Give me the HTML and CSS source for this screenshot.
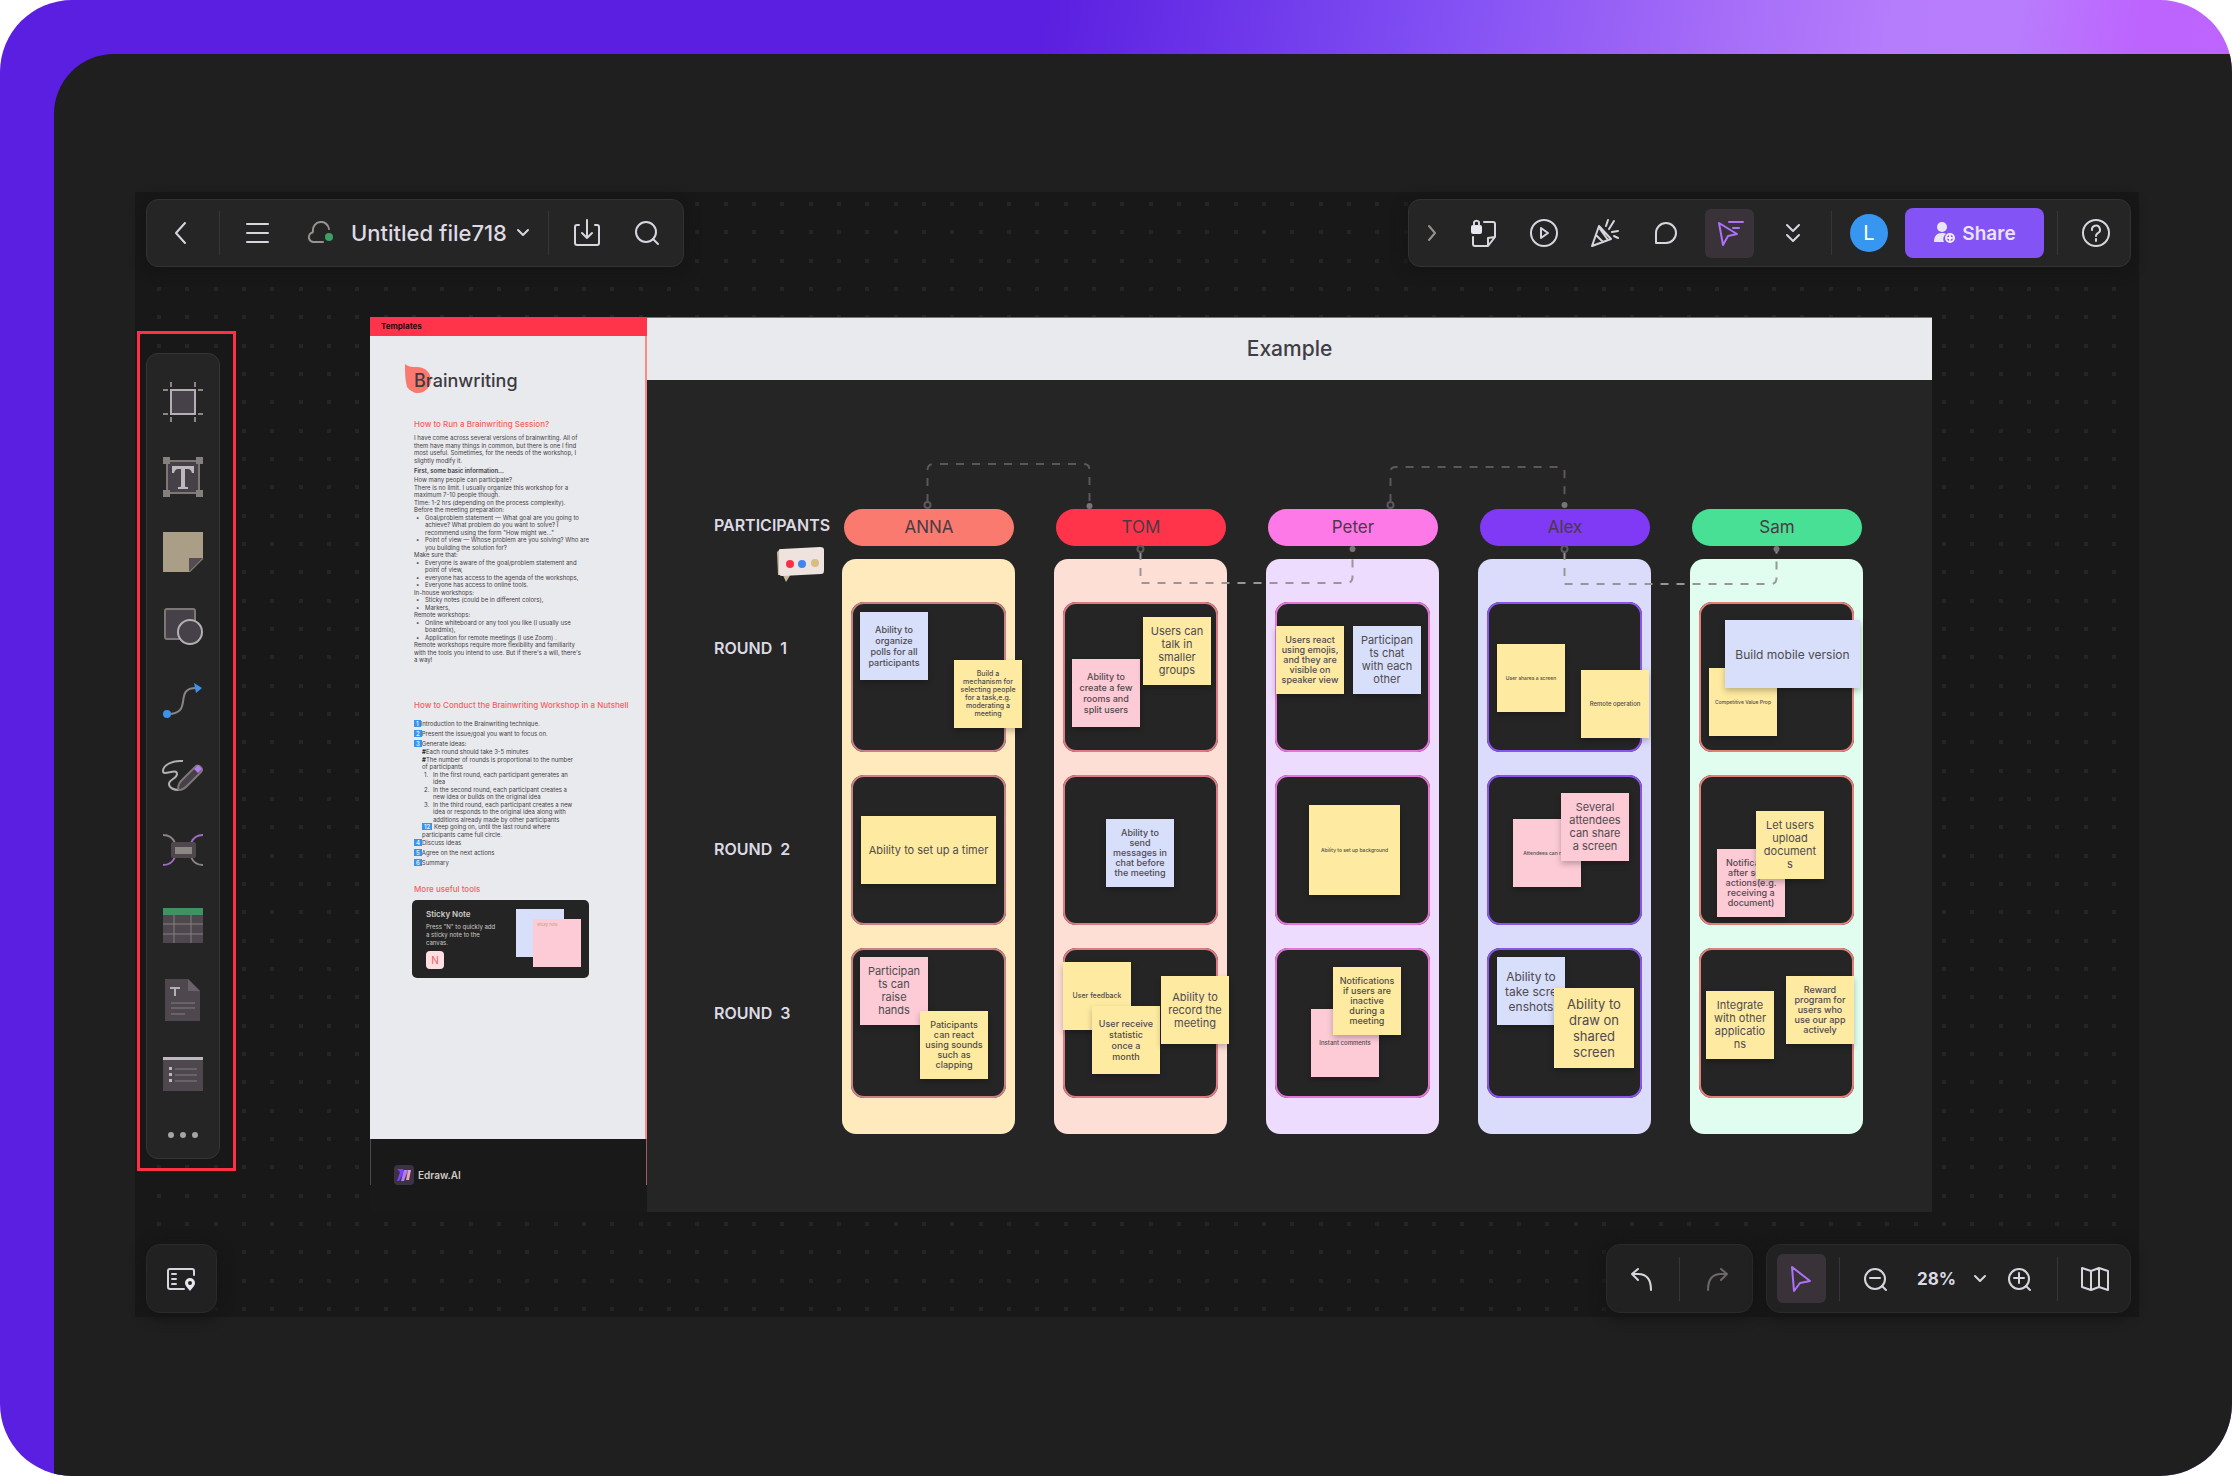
FILE: index.html
```html
<!DOCTYPE html>
<html lang="en">
<head>
<meta charset="utf-8">
<title>Untitled file718</title>
<link rel="stylesheet" href="styles.css">
</head>
<body>
<div class="frame">
<div class="backdrop">
<main class="screen">
  <svg class="dots" width="100%" height="100%" aria-hidden="true">
    <defs>
      <pattern id="dot-grid" width="85" height="85" patternUnits="userSpaceOnUse">
        <g fill="#252525">
          <rect x="22" y="10" width="4" height="4"/><rect x="50" y="10" width="4" height="4"/><rect x="79" y="10" width="4" height="4"/>
          <rect x="22" y="38" width="4" height="4"/><rect x="50" y="38" width="4" height="4"/><rect x="79" y="38" width="4" height="4"/>
          <rect x="22" y="67" width="4" height="4"/><rect x="50" y="67" width="4" height="4"/><rect x="79" y="67" width="4" height="4"/>
        </g>
      </pattern>
    </defs>
    <rect width="100%" height="100%" fill="url(#dot-grid)"/>
  </svg>

  <header class="bar-row">
    <div class="bar file-bar">
      <button class="icon-btn" aria-label="Back"><svg width="24" height="24" viewBox="0 0 24 24"><path d="M16 2 7 12l9 10"/></svg></button>
      <span class="sep"></span>
      <button class="icon-btn" aria-label="Menu"><svg width="24" height="24" viewBox="0 0 24 24"><path d="M1 3h21M1 12h21M1 21h21"/></svg></button>
      <button class="file-name">
        <svg width="28" height="24" viewBox="0 0 28 24"><path class="dim" d="M16 21H6a5 5 0 0 1-2-9c1 0 2-1 2-2a8 8 0 0 1 16-2"/><circle class="ok" cx="22" cy="16" r="4"/></svg>
        <span>Untitled file718</span>
        <svg class="chev" width="18" height="18" viewBox="0 0 18 18"><path d="m4 6 5 5 5-5"/></svg>
      </button>
      <span class="sep"></span>
      <button class="icon-btn" aria-label="Export"><svg width="28" height="28" viewBox="0 0 28 28"><path d="M6 6H4a2 2 0 0 0-2 2v16a2 2 0 0 0 2 2h20a2 2 0 0 0 2-2V8a2 2 0 0 0-2-2h-2M14 1v18m-5-5 5 5 5-5"/></svg></button>
      <button class="icon-btn" aria-label="Search"><svg width="26" height="26" viewBox="0 0 26 26"><circle cx="12" cy="12" r="10"/><path d="m19 19 5 5"/></svg></button>
    </div>
    <div class="bar action-bar">
      <button class="icon-btn slim" aria-label="Collapse"><svg width="18" height="18" viewBox="0 0 18 18"><path class="dim" d="m6 2 6 7-6 7"/></svg></button>
      <button class="icon-btn" aria-label="Lock"><svg width="30" height="30" viewBox="0 0 30 30"><path d="M16 4h9a2 2 0 0 1 2 2v13l-7 1v8H7a2 2 0 0 1-2-2v-7M27 19l-7 9"/><rect class="solid" x="3" y="7" width="11" height="9" rx="2"/><path d="M6 7V4a3 3 0 0 1 5 0v3"/></svg></button>
      <button class="icon-btn" aria-label="Present"><svg width="30" height="30" viewBox="0 0 30 30"><circle cx="15" cy="15" r="13"/><path d="m12 10 7 5-7 5z"/></svg></button>
      <button class="icon-btn" aria-label="Celebrate"><svg width="30" height="30" viewBox="0 0 30 30"><path d="M9 8 2 28l19-7zM6 17l7 7M10 11l8 11M16 8l2-6M19 11l5-8M22 14l6-1M24 18l4 2"/></svg></button>
      <button class="icon-btn" aria-label="Comment"><svg width="26" height="26" viewBox="0 0 26 26"><path d="M3 23V13a10 10 0 1 1 10 10z"/></svg></button>
      <button class="icon-btn active" aria-label="Follow cursor"><svg width="28" height="28" viewBox="0 0 28 28"><path d="m3 4 4 22 5-9 9-2zM13 3h14M17 9h6"/></svg></button>
      <button class="icon-btn" aria-label="More"><svg width="20" height="24" viewBox="0 0 20 24"><path d="m4 4 6 6 6-6M4 14l6 6 6-6"/></svg></button>
      <span class="sep"></span>
      <button class="avatar">L</button>
      <button class="share"><svg width="22" height="22" viewBox="0 0 22 22"><circle class="fill" cx="9" cy="5" r="5"/><path class="fill" d="M1 20c0-6 3-9 8-9 2 0 3 0 4 1a6 6 0 0 0-2 8z"/><circle class="ring" cx="17" cy="16" r="4"/><path class="ring" d="M17 14v4M15 16h4"/></svg>Share</button>
      <span class="sep"></span>
      <button class="icon-btn" aria-label="Help"><svg width="30" height="30" viewBox="0 0 30 30"><circle cx="15" cy="15" r="13"/><path d="M11 12a4 4 0 1 1 6 3c-1 1-2 1-2 3M15 21v2"/></svg></button>
    </div>
  </header>

  <div class="workspace">
    <aside class="highlight">
      <nav class="tool-panel" aria-label="Tools">
        <div class="tools">
          <button aria-label="Frame"><svg width="40" height="40" viewBox="0 0 40 40"><path class="g2" d="M8 0v5M32 0v5M8 35v5M32 35v5M0 8h5M0 32h5M35 8h5M35 32h5"/><rect class="g1" x="8" y="8" width="24" height="24"/></svg></button>
          <button aria-label="Text"><svg width="40" height="40" viewBox="0 0 40 40"><rect class="g3" x="4" y="4" width="32" height="32"/><path class="f2" d="M0 0h7v7H0zM33 0h7v7h-7zM0 33h7v7H0zM33 33h7v7h-7z"/><path class="f1" d="M9 9h22v7h-2c-1-3-2-4-4-4h-3v17c0 1 1 1 3 1v2H15v-2c2 0 3 0 3-1V12h-3c-2 0-3 1-4 4H9z"/></svg></button>
          <button aria-label="Sticky note"><svg width="40" height="40" viewBox="0 0 40 40"><path fill="#aa9f86" d="M0 0h40v27L27 40H0z"/><path fill="#544c55" d="M26 26h14L26 40z"/></svg></button>
          <button aria-label="Shapes"><svg width="40" height="40" viewBox="0 0 40 40"><rect class="g3" x="2" y="3" width="30" height="30" rx="2"/><circle class="g1" cx="27" cy="26" r="12"/></svg></button>
          <button aria-label="Connector"><svg width="40" height="40" viewBox="0 0 40 40"><path class="g2" d="M5 33c26 0 5-26 28-26"/><circle fill="#3a94ee" cx="4" cy="33" r="4"/><path fill="#3a94ee" d="m31 2 8 5-6 5z"/></svg></button>
          <button aria-label="Pen"><svg width="42" height="40" viewBox="0 0 42 40"><path class="g1 hollow" d="M21 5C9 4 1 10 1 15c0 6 14-4 14 3 0 5-8 5-8 10 0 4 5 6 10 6"/><path class="g3" d="M17 34c-2-2 0-7 2-9L34 10c3-2 8 3 5 6L25 30c-2 2-6 4-8 4z"/><path fill="#b27cf0" d="m36 9 4 4-4 4-4-4z"/></svg></button>
          <button aria-label="Mind map"><svg width="40" height="40" viewBox="0 0 40 40"><path class="g2" d="M0 4c6 0 10 3 12 8M40 34c-6 0-10-3-12-8"/><path fill="none" stroke="#a06ac4" stroke-width="2" d="M40 4c-6 0-10 3-12 8M0 34c6 0 10-3 12-8"/><rect fill="#4f474e" x="8" y="11" width="25" height="16" rx="2"/><rect fill="#8c8685" x="12" y="16" width="17" height="7"/></svg></button>
          <button aria-label="Table"><svg width="40" height="40" viewBox="0 0 40 40"><path fill="#4f474e" d="M0 3h40v35H0z"/><path fill="#3f9361" d="M0 3h40v7H0z"/><path class="thin" d="M11 10v28M28 10v28M0 19h40M0 29h40"/></svg></button>
          <button aria-label="Document"><svg width="40" height="42" viewBox="0 0 40 42"><path fill="#4f474e" d="M2 0h23l12 12v30H2z"/><path fill="#6a626a" d="M25 0v12h12z"/><path class="g1" d="M7 9h10M12 9v8"/><path class="thin" d="M8 24h24M8 29h24M8 35h14"/></svg></button>
          <button aria-label="List"><svg width="40" height="40" viewBox="0 0 40 40"><path fill="#4f474e" d="M0 2h40v34H0z"/><path class="f1" d="M0 2h40v3H0z"/><path class="thin" d="M12 14h22M12 20h22M12 26h22"/><path class="f1" d="M6 12h3v3H6zM6 18h3v3H6zM6 24h3v3H6z"/></svg></button>
        </div>
        <button class="more" aria-label="More tools"><svg width="40" height="8" viewBox="0 0 40 8"><g fill="#a8a3a2"><circle cx="8" cy="4" r="3"/><circle cx="20" cy="4" r="3"/><circle cx="32" cy="4" r="3"/></g></svg></button>
      </nav>
    </aside>

    <section class="board">
      <article class="sheet">
        <div class="tag">Templates</div>
        <div class="sheet-body">
          <h1><svg class="blob" width="28" height="30" viewBox="0 0 28 30"><path fill="#f9796f" d="M0 0c4 3 7 3 12 3a13 13 0 1 1-10 20C0 16 0 8 0 0z"/></svg><span>Brainwriting</span></h1>
          <h2>How to Run a Brainwriting Session?</h2>
          <div class="lines intro">
            <p>I have come across several versions of brainwriting. All of</p>
            <p>them have many things in common, but there is one I find</p>
            <p>most useful. Sometimes, for the needs of the workshop, I</p>
            <p>slightly modify it.</p>
          </div>
          <h3>First, some basic information...</h3>
          <div class="lines guide">
            <p>How many people can participate?</p>
            <p>There is no limit. I usually organize this workshop for a</p>
            <p>maximum 7-10 people though.</p>
            <p>Time: 1-2 hrs (depending on the process complexity).</p>
            <p>Before the meeting preparation:</p>
            <p class="li dot">Goal/problem statement — What goal are you going to</p>
            <p class="li">achieve? What problem do you want to solve? I</p>
            <p class="li">recommend using the form "How might we..."</p>
            <p class="li dot">Point of view — Whose problem are you solving? Who are</p>
            <p class="li">you building the solution for?</p>
            <p>Make sure that:</p>
            <p class="li dot">Everyone is aware of the goal/problem statement and</p>
            <p class="li">point of view,</p>
            <p class="li dot">everyone has access to the agenda of the workshops,</p>
            <p class="li dot">Everyone has access to online tools.</p>
            <p>In-house workshops:</p>
            <p class="li dot">Sticky notes (could be in different colors),</p>
            <p class="li dot">Markers,</p>
            <p>Remote workshops:</p>
            <p class="li dot">Online whiteboard or any tool you like (I usually use</p>
            <p class="li">boardmix),</p>
            <p class="li dot">Application for remote meetings (I use Zoom) .</p>
            <p>Remote workshops require more flexibility and familiarity</p>
            <p>with the tools you intend to use. But if there's a will, there's</p>
            <p>a way!</p>
          </div>
          <h2 class="second">How to Conduct the Brainwriting Workshop in a Nutshell</h2>
          <p class="step"><b>1</b>Introduction to the Brainwriting technique.</p>
          <p class="step"><b>2</b>Present the issue/goal you want to focus on.</p>
          <p class="step"><b>3</b>Generate ideas:</p>
          <div class="lines detail">
            <p><i>#</i>Each round should take 3-5 minutes</p>
            <p><i>#</i>The number of rounds is proportional to the number</p>
            <p>of participants</p>
            <p class="num" data-n="1.">In the first round, each participant generates an</p>
            <p class="num">idea</p>
            <p class="num" data-n="2.">In the second round, each participant creates a</p>
            <p class="num">new idea or builds on the original idea</p>
            <p class="num" data-n="3.">In the third round, each participant creates a new</p>
            <p class="num">idea or responds to the original idea along with</p>
            <p class="num">additions already made by other participants</p>
            <p><b>12</b> Keep going on, until the last round where</p>
            <p>participants came full circle.</p>
          </div>
          <p class="step"><b>4</b>Discuss ideas</p>
          <p class="step"><b>5</b>Agree on the next actions</p>
          <p class="step"><b>6</b>Summary</p>
          <h2 class="third">More useful tools</h2>
          <div class="tip">
            <div class="tip-text">
              <strong>Sticky Note</strong>
              <p>Press "N" to quickly add<br>a sticky note to the<br>canvas.</p>
              <kbd>N</kbd>
            </div>
            <div class="tip-art"><span class="sq-blue"></span><span class="sq-pink">sticky note</span></div>
          </div>
        </div>
        <footer class="brand">
          <svg width="20" height="20" viewBox="0 0 20 20"><rect width="20" height="20" rx="4" fill="#3b3344"/><path fill="#7a43f5" d="M3 4h6l1 3-5 9H3l3-9z"/><path fill="#b07cf5" d="M10 5h4l-4 11H7z"/><path fill="#f0a0b8" d="M14 5h3l-2 10h-3z"/></svg>
          Edraw.AI
        </footer>
      </article>

      <div class="example">
        <h2 class="example-head">Example</h2>
        <div class="example-body">
          <div class="labels">
            <div class="label-top">PARTICIPANTS</div>
            <svg class="bubble" width="48" height="36" viewBox="0 0 48 36"><path fill="#c9b89a" d="M1 5 4 2v26H2zM6 26l4 9 5-8z"/><path fill="#eee3df" d="M3 4c0-2 1-2 3-2l38-2c3 0 4 1 4 3v20c0 3-1 4-3 4L6 29c-2 0-3-1-3-3z"/><circle cx="14" cy="17" r="4" fill="#fb3048"/><circle cx="26" cy="17" r="4" fill="#4285f0"/><circle cx="39" cy="16" r="4" fill="#d8be82"/></svg>
            <div class="round r1">ROUND &nbsp;1</div>
            <div class="round r2">ROUND &nbsp;2</div>
            <div class="round r3">ROUND &nbsp;3</div>
          </div>
          <div class="columns">
            <section class="person anna">
              <h3>ANNA</h3>
              <div class="lane">
                <div class="cell"><div class="note blue m n-polls">Ability to organize<br>polls for all participants</div><div class="note xs n-select">Build a mechanism for selecting people for a task,e.g. moderating a meeting</div></div>
                <div class="cell"><div class="note l n-timer">Ability to set up a timer</div></div>
                <div class="cell"><div class="note pink l n-hands">Participan<wbr>ts can<br>raise<br>hands</div><div class="note s n-sounds">Paticipants can react using sounds such as clapping</div></div>
              </div>
            </section>
            <section class="person tom">
              <h3>TOM</h3>
              <div class="lane">
                <div class="cell"><div class="note pink m n-rooms">Ability to create a few rooms and split users</div><div class="note l n-groups">Users can talk in smaller groups</div></div>
                <div class="cell"><div class="note blue s n-chat">Ability to<br>send<br>messages in chat before the meeting</div></div>
                <div class="cell"><div class="note xs n-feedback">User feedback</div><div class="note m n-stats">User receive statistic<br>once a<br>month</div><div class="note l n-record">Ability to record the meeting</div></div>
              </div>
            </section>
            <section class="person peter">
              <h3>Peter</h3>
              <div class="lane">
                <div class="cell"><div class="note s n-emoji">Users react using emojis, and they are visible on speaker view</div><div class="note blue l n-each">Participan<wbr>ts chat<br>with each other</div></div>
                <div class="cell"><div class="note xxs n-bg">Ability to set up background</div></div>
                <div class="cell"><div class="note pink xxs wide n-comment">Instant comments</div><div class="note s n-inactive">Notifications if users are inactive<br>during a meeting</div></div>
              </div>
            </section>
            <section class="person alex">
              <h3>Alex</h3>
              <div class="lane">
                <div class="cell"><div class="note xxs n-shares">User shares a screen</div><div class="note xxs wide n-remote">Remote operation</div></div>
                <div class="cell"><div class="note pink xxs n-vote">Attendees can raise</div><div class="note pink l n-several">Several attendees can share a screen</div></div>
                <div class="cell"><div class="note blue xl n-shots">Ability to take scre<wbr>enshots</div><div class="note xxl n-draw">Ability to draw on shared screen</div></div>
              </div>
            </section>
            <section class="person sam">
              <h3>Sam</h3>
              <div class="lane">
                <div class="cell"><div class="note xxs n-value">Competitive Value Prop</div><div class="note blue xl n-mobile">Build mobile version</div></div>
                <div class="cell"><div class="note pink s n-notify">Notification after some actions(e.g. receiving a document)</div><div class="note l n-upload">Let users upload document<br>s</div></div>
                <div class="cell"><div class="note l n-apps">Integrate with other applicatio<wbr>ns</div><div class="note s n-reward">Reward program for users who<br>use our app actively</div></div>
              </div>
            </section>
          </div>
          <svg class="links" viewBox="648 380 1284 832" aria-hidden="true">
            <g fill="none" stroke="#5d575d" stroke-width="2" stroke-dasharray="8 8">
              <path d="M928 502v-32q0-6 6-6h150q6 0 6 6v34"/>
              <path d="M1391 502v-30q0-5 5-5h164q5 0 5 5v30"/>
            </g>
            <g fill="none" stroke="#9a959c" stroke-width="2" stroke-dasharray="8 8">
              <path d="M1141 552v31h206q6 0 6-6v-26"/>
              <path d="M1565 552v32h206q6 0 6-6v-27"/>
            </g>
            <g fill="#252525" stroke="#5d575d" stroke-width="2"><circle cx="928" cy="505" r="3"/><circle cx="1391" cy="505" r="3"/><circle cx="1141" cy="549" r="3"/><circle cx="1565" cy="549" r="3"/></g>
            <g fill="#79747a"><circle cx="1090" cy="506" r="3"/><circle cx="1565" cy="505" r="3"/><circle cx="1353" cy="549" r="3"/><circle cx="1777" cy="549" r="3"/></g>
          </svg>
        </div>
      </div>
    </section>
  </div>

  <footer class="bar-row bottom-row">
    <div class="bar corner-bar">
      <button class="icon-btn" aria-label="Outline"><svg width="30" height="26" viewBox="0 0 30 26"><path d="M28 9V5a2 2 0 0 0-2-2H4a2 2 0 0 0-2 2v16a2 2 0 0 0 2 2h14M6 8h4M6 13h4M6 18h4"/><path class="solid" fill-rule="evenodd" d="M24 12a5 5 0 0 1 5 5c0 3-3 5-5 8-2-3-5-5-5-8a5 5 0 0 1 5-5zm0 3a2 2 0 1 0 0 4 2 2 0 0 0 0-4z"/></svg></button>
    </div>
    <div class="bar-group">
      <div class="bar history-bar">
        <button class="icon-btn" aria-label="Undo"><svg width="26" height="26" viewBox="0 0 26 26"><path d="M9 3 3 8l6 6M3 8h6c9 0 13 6 13 16"/></svg></button>
        <span class="sep"></span>
        <button class="icon-btn faded" aria-label="Redo"><svg width="26" height="26" viewBox="0 0 26 26"><path d="m17 3 6 5-6 6M23 8h-6C8 8 4 14 4 24"/></svg></button>
      </div>
      <div class="bar zoom-bar">
        <button class="icon-btn active" aria-label="Select"><svg width="26" height="28" viewBox="0 0 26 28"><path d="m4 2 2 24 6-8 10-2z"/></svg></button>
        <span class="sep"></span>
        <button class="icon-btn" aria-label="Zoom out"><svg width="26" height="26" viewBox="0 0 26 26"><circle cx="13" cy="13" r="10"/><path d="M8 12h10m2 8 4 4"/></svg></button>
        <button class="zoom-value">28%<svg width="18" height="18" viewBox="0 0 18 18"><path d="m4 6 5 5 5-5"/></svg></button>
        <button class="icon-btn" aria-label="Zoom in"><svg width="26" height="26" viewBox="0 0 26 26"><circle cx="13" cy="13" r="10"/><path d="M8 12h10M13 7v10m7 3 4 4"/></svg></button>
        <span class="sep"></span>
        <button class="icon-btn" aria-label="Map"><svg width="30" height="26" viewBox="0 0 30 26"><path d="m2 2 9 3 8-3 9 3v19l-9-3-8 3-9-3zM11 5v19M19 2v19"/></svg></button>
      </div>
    </div>
  </footer>
</main>
</div>
</div>
</body>
</html>
```
FILE: styles.css
```css
* { box-sizing: border-box; }

body {
  margin: 0;
  background: #fff;
  font-family: Inter, "Liberation Sans", sans-serif;
  color: #dddae4;
}

h1, h2, h3, p { margin: 0; font-weight: 400; }

button {
  border: 0;
  padding: 0;
  background: none;
  color: inherit;
  font: inherit;
  cursor: pointer;
}

/* Outer frame */
.frame {
  min-height: 100vh;
  display: flex;
  padding: 54px 0 0 54px;
  border-radius: 72px;
  overflow: hidden;
  background: linear-gradient(100deg, #5a1fe0 0%, #5a1fe0 42%, #7f4df3 57%, #a56cf8 69%, #b57cfc 76%, #b87dfc 81%, #bd64ff 86%, #bf63ff 100%);
}

.backdrop {
  flex: 1;
  min-width: 0;
  padding: 138px 93px 159px 81px;
  border-top-left-radius: 60px;
  background: #1f1f1f;
}

.screen {
  position: relative;
  isolation: isolate;
  display: flex;
  flex-direction: column;
  height: 100%;
  padding: 7px 0 4px;
  background: #181818;
}

.dots { position: absolute; inset: 0; z-index: -1; }

/* Floating bars */
.bar-row {
  display: flex;
  justify-content: space-between;
  padding: 0 8px 0 11px;
}

.bar {
  display: flex;
  align-items: center;
  height: 68px;
  padding: 0 13px;
  border: 1px solid #323133;
  border-radius: 12px;
  background: #252525;
  box-shadow: 0 2px 12px 4px #151515;
}

.bar svg {
  display: block;
  fill: none;
  stroke: #d9d5df;
  stroke-width: 2;
  stroke-linecap: round;
  stroke-linejoin: round;
}

.bar .dim { stroke: #98928f; }
.bar .ok { fill: #3f9e63; stroke: none; }
.bar .solid, .bar .fill { fill: #e8e6ee; stroke: none; }
.bar .ring { fill: #8353f5; stroke: #f1edff; }

.sep { width: 1px; height: 44px; background: #37353a; }

.icon-btn {
  display: grid;
  place-items: center;
  width: 44px;
  height: 44px;
  border-radius: 6px;
}

.icon-btn.slim { width: 24px; }
.icon-btn.active { width: 49px; height: 49px; background: #393239; }
.icon-btn.active svg { stroke: #ad72f8; }
.icon-btn.faded svg { stroke: #6d676a; }

.file-bar { gap: 16px; padding: 0 14px 0 12px; }

.file-name {
  display: flex;
  align-items: center;
  margin-left: 11px;
  font-size: 22px;
  line-height: 28px;
  font-weight: 500;
}
.file-name span { margin: 0 7px 0 16px; }

.action-bar { gap: 17px; padding: 0 12px 0 11px; }
.action-bar .sep { margin: 0 -1px; }

.avatar {
  width: 38px;
  height: 38px;
  margin-left: 2px;
  border-radius: 50%;
  background: #3797f0;
  color: #fff;
  font-size: 20px;
}

.share {
  display: flex;
  align-items: center;
  justify-content: center;
  gap: 7px;
  width: 139px;
  height: 50px;
  margin-right: -3px;
  border-radius: 8px;
  background: #8353f5;
  color: #e9e4fb;
  font-size: 19px;
  font-weight: 600;
}

/* Workspace */
.workspace {
  flex: 1;
  display: flex;
  align-items: flex-start;
  padding: 50px 207px 32px 2px;
}

.highlight {
  flex: none;
  margin: 14px 134px 0 0;
  padding: 19px 13px 9px 6px;
  border: 3px solid #ff2f46;
}

.tool-panel {
  display: flex;
  flex-direction: column;
  width: 74px;
  height: 806px;
  padding-top: 11px;
  border: 1px solid #353438;
  border-radius: 12px;
  background: #252525;
}

.tools {
  display: grid;
  grid-template-rows: repeat(10, 1fr);
  height: 747px;
}

.tool-panel button { display: grid; place-items: center; }
.more { flex: 1; }

.tools .g1 { fill: #464048; stroke: #b3afb4; stroke-width: 2; }
.tools .g2 { fill: none; stroke: #8b8584; stroke-width: 2; }
.tools .g3 { fill: #464048; stroke: #7d7776; stroke-width: 2; }
.tools .hollow { fill: none; }
.tools .f1 { fill: #bcb8bb; }
.tools .f2 { fill: #85807e; }
.tools .thin { fill: none; stroke: #857f80; stroke-width: 1; }

/* Board */
.board {
  flex: 1;
  min-width: 0;
  display: flex;
  align-self: stretch;
}

.sheet {
  display: flex;
  flex-direction: column;
  width: 277px;
  flex: none;
  background: #191919;
  color: #3f3c41;
  font-size: 6px;
  line-height: 7px;
}

.tag {
  height: 19px;
  padding: 0 11px;
  background: #ff344b;
  color: #2a0a12;
  font-size: 8px;
  line-height: 19px;
  font-weight: 700;
}

.sheet-body {
  height: 803px;
  padding: 28px 0 0 44px;
  border-right: 2px solid #f98a86;
  background: #e9eaee;
}

.sheet h1 {
  position: relative;
  isolation: isolate;
  height: 34px;
  color: #3d3a40;
  font-size: 18px;
  line-height: 34px;
  font-weight: 500;
}
.blob { position: absolute; left: -9px; top: 0; z-index: -1; }

.sheet h2 {
  height: 12px;
  margin-top: 20px;
  color: #fb5c5f;
  font-size: 8px;
  line-height: 12px;
  font-weight: 500;
  white-space: nowrap;
}
.sheet h3 { height: 8px; margin: 3px 0 1px; font-size: 6px; line-height: 8px; font-weight: 600; }

.lines { display: grid; grid-auto-rows: 1fr; white-space: nowrap; }
.intro { height: 30px; margin-top: 4px; }
.guide { height: 188px; }
.detail { height: 90px; margin: 0 0 0 8px; }

.li { position: relative; padding-left: 11px; }
.dot::before { content: "•"; position: absolute; left: 2px; }
.num { position: relative; padding-left: 11px; }
.num::before { content: attr(data-n); position: absolute; left: 2px; }
.lines i { font-style: normal; font-weight: 700; color: #222; }

.sheet h2.second { margin: 35px 0 8px; }
.step { display: flex; align-items: center; height: 9px; white-space: nowrap; }
.step + .step { margin-top: 1px; }
.sheet b { display: inline-block; padding: 0 2px; background: #3795ee; color: #e6f2ff; font-weight: 600; }

.sheet h2.third { margin: 16px 0 5px; }

.tip {
  display: flex;
  justify-content: space-between;
  width: 177px;
  height: 78px;
  margin-left: -2px;
  padding: 8px 8px 0 14px;
  border-radius: 5px;
  background: #242424;
  color: #cfcbc8;
}
.tip strong { display: block; font-size: 8px; line-height: 12px; font-weight: 600; }
.tip p { margin: 3px 0 4px; line-height: 8px; white-space: nowrap; }
.tip kbd {
  display: block;
  width: 18px;
  height: 18px;
  border-radius: 4px;
  background: #ffdfe2;
  color: #f2605f;
  font: 10px/18px Inter, sans-serif;
  text-align: center;
}
.tip-art { display: grid; grid-template-columns: 17px 48px; }
.tip-art span { grid-row: 1; width: 48px; height: 48px; }
.sq-blue { grid-column: 1; margin-top: 1px; background: #d7dffb; }
.sq-pink { grid-column: 2; margin-top: 11px; padding: 2px 4px; background: #fccbd6; color: #c09a80; font-size: 4px; line-height: 8px; }

.brand {
  display: flex;
  align-items: center;
  gap: 4px;
  height: 46px;
  padding: 26px 0 0 23px;
  border-right: 1px solid #a35a63;
  border-left: 1px solid #4c484e;
  color: #cfc9c6;
  font-size: 10px;
  line-height: 20px;
  font-weight: 600;
}

.example { flex: 1; min-width: 0; display: flex; flex-direction: column; background: #252525; }

.example-head {
  height: 63px;
  border-top: 1px solid #77757a;
  background: #e9eaee;
  color: #403d44;
  font-size: 21px;
  line-height: 62px;
  font-weight: 500;
  text-align: center;
}

.example-body {
  position: relative;
  flex: 1;
  display: flex;
  padding: 129px 69px 78px 67px;
}

.links { position: absolute; inset: 0; width: 100%; height: 100%; }

.labels { width: 128px; flex: none; font-size: 16px; line-height: 24px; font-weight: 600; }
.label-top { line-height: 33px; height: 34px; }
.bubble { display: block; margin: 4px 0 0 62px; }
.r1 { margin-top: 53px; }
.r2 { margin-top: 177px; }
.r3 { margin-top: 140px; }

.columns { flex: 1; display: grid; grid-template-columns: repeat(5, 1fr); gap: 39px; }

.person { display: flex; flex-direction: column; gap: 13px; }
.person h3 {
  margin: 0 1px 0 2px;
  height: 37px;
  border-radius: 19px;
  background: var(--pill);
  color: #4b3a44;
  font-size: 17px;
  line-height: 37px;
  text-align: center;
}
.lane {
  display: flex;
  flex-direction: column;
  gap: 23px;
  padding: 43px 9px 36px;
  border-radius: 14px;
  background: var(--lane);
}
.cell {
  position: relative;
  height: 150px;
  border-radius: 13px;
  background: #252525;
  box-shadow: inset 0 0 0 2px var(--edge);
}

.anna { --pill: #fa7a6f; --lane: #feeabc; --edge: #cb8088; }
.tom { --pill: #ff344b; --lane: #fedfd6; --edge: #dd7a84; }
.peter { --pill: #fd79e8; --lane: #eddcfd; --edge: #e675da; }
.alex { --pill: #8039f5; --lane: #dbdcfc; --edge: #8a55ec; }
.sam { --pill: #47e095; --lane: #e0fdef; --edge: #e4807a; }

/* Sticky notes, placed freely on the canvas */
.note {
  position: absolute;
  display: grid;
  place-content: center;
  width: 68px;
  height: 68px;
  padding: 0 7px;
  background: #feeba1;
  color: #4f4a4e;
  font-weight: 500;
  text-align: center;
  box-shadow: 0 3px 6px rgba(0, 0, 0, .25);
}
.note.blue { background: #d7dffb; }
.note.pink { background: #fccbd6; }
.note.xxs { padding: 0; font-size: 5px; line-height: 8px; }
.note.xs { padding: 0 4px; font-size: 7px; line-height: 8px; }
.note.s { padding: 0 4px; font-size: 9px; line-height: 10px; }
.note.m { padding: 0 4px; font-size: 9px; line-height: 11px; }
.note.l { padding: 0 4px; font-size: 11px; line-height: 13px; font-weight: 400; }
.note.xl { padding: 0 4px; font-size: 12px; line-height: 15px; font-weight: 400; }
.note.xxl { font-size: 13px; line-height: 16px; font-weight: 400; }
.note.wide { font-size: 6px; }

.n-polls { left: 9px; top: 10px; }
.n-select { left: 103px; top: 58px; }
.n-timer { left: 10px; top: 41px; width: 135px; }
.n-hands { left: 9px; top: 9px; }
.n-sounds { left: 69px; top: 63px; }
.n-rooms { left: 9px; top: 57px; }
.n-groups { left: 80px; top: 15px; }
.n-chat { left: 43px; top: 44px; }
.n-feedback { left: 0; top: 14px; }
.n-stats { left: 29px; top: 58px; }
.n-record { left: 98px; top: 28px; }
.n-emoji { left: 1px; top: 24px; }
.n-each { left: 78px; top: 24px; }
.n-bg { left: 34px; top: 30px; width: 91px; height: 90px; }
.n-comment { left: 36px; top: 61px; }
.n-inactive { left: 58px; top: 19px; }
.n-shares { left: 10px; top: 42px; }
.n-remote { left: 94px; top: 68px; }
.n-vote { left: 26px; top: 44px; }
.n-several { left: 74px; top: 18px; }
.n-shots { left: 10px; top: 9px; }
.n-draw { left: 67px; top: 40px; width: 80px; height: 80px; }
.n-value { left: 10px; top: 66px; }
.n-mobile { left: 26px; top: 18px; width: 135px; }
.n-notify { left: 18px; top: 74px; }
.n-upload { left: 57px; top: 36px; }
.n-apps { left: 7px; top: 43px; }
.n-reward { left: 87px; top: 28px; }

/* Bottom bars */
.bottom-row .bar { height: 69px; background: #212121; border-color: #2a2a2b; border-radius: 14px; }
.bottom-row .corner-bar { padding: 0 13px 0 12px; }
.bar-group { display: flex; gap: 13px; }
.bottom-row .history-bar { gap: 15px; }
.bottom-row .zoom-bar { gap: 13px; padding: 0 13px 0 10px; }
.zoom-bar .sep + .icon-btn:last-child { margin-left: 2px; }
.zoom-bar .sep:nth-last-child(2) { margin-left: 3px; }
.zoom-value {
  display: flex;
  align-items: center;
  gap: 15px;
  margin: 0 -5px 0 7px;
  font-size: 17px;
  font-weight: 700;
}
```
